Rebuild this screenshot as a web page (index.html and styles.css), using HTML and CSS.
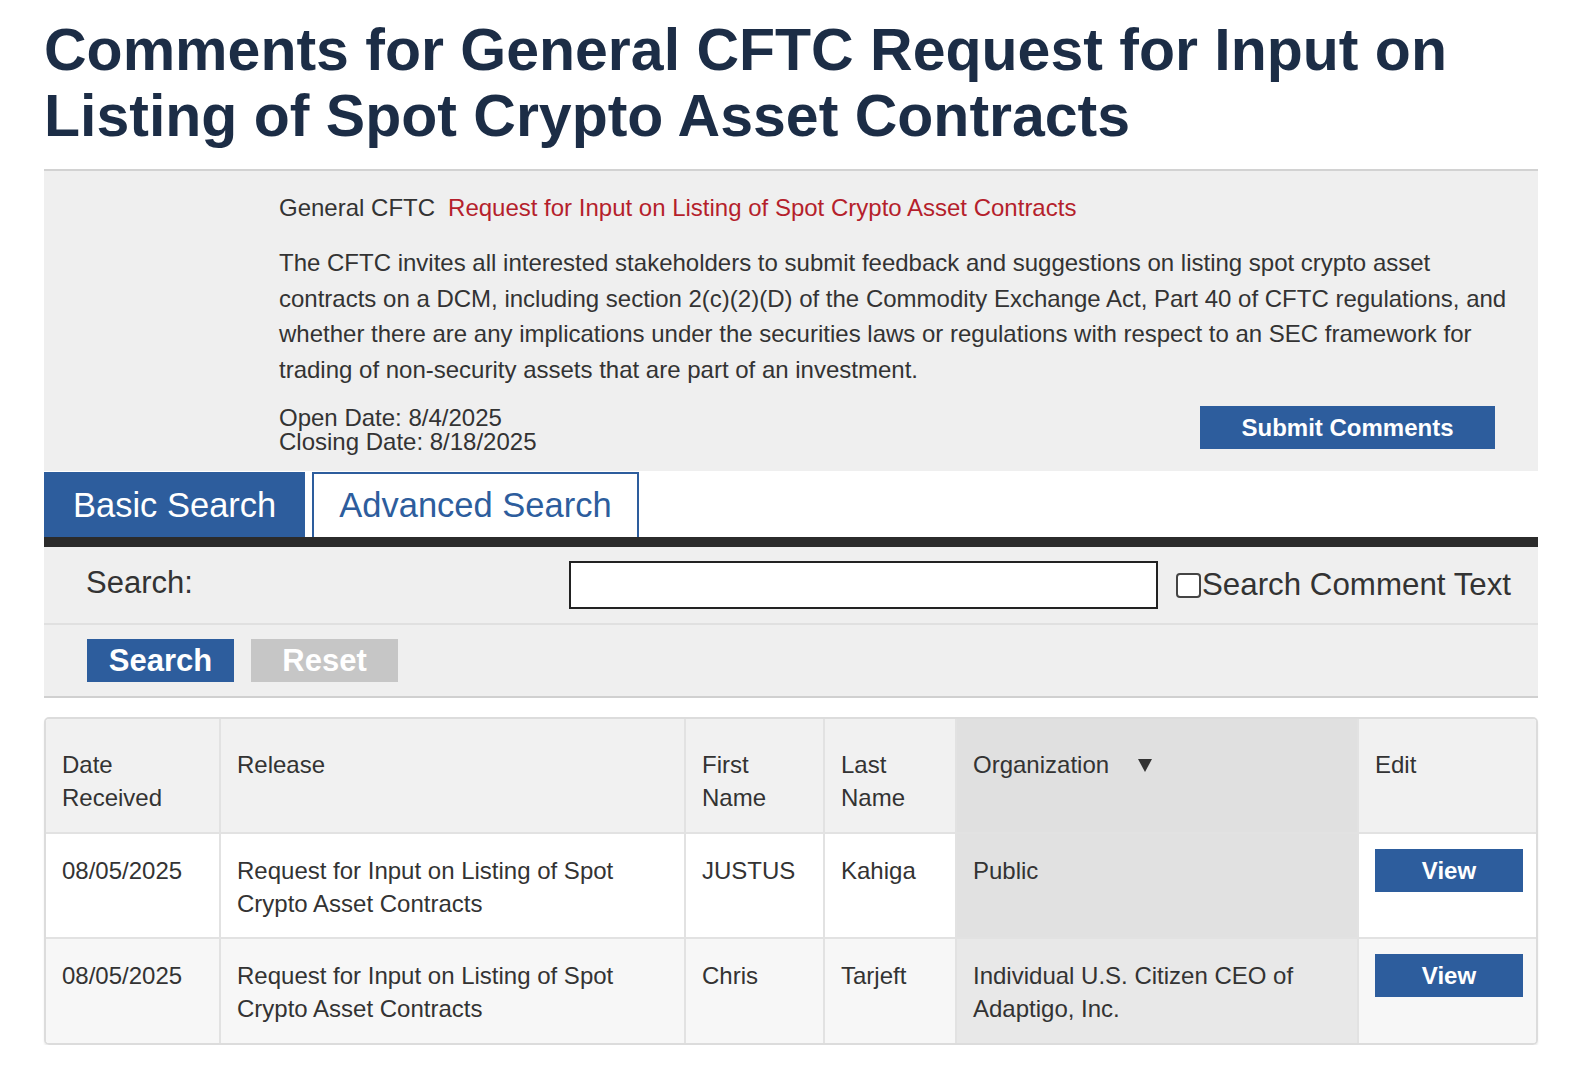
FILE: index.html
```html
<!DOCTYPE html>
<html lang="en">
<head>
<meta charset="utf-8">
<title>Comments for General CFTC Request for Input on Listing of Spot Crypto Asset Contracts</title>
<link rel="stylesheet" href="styles.css">
</head>
<body>
<div class="page">
  <h1 class="page-title">Comments for General CFTC Request for Input on Listing of Spot Crypto Asset Contracts</h1>

  <section class="release-box">
    <div class="release-head">
      <span class="release-type">General CFTC</span>
      <a class="release-link" href="#">Request for Input on Listing of Spot Crypto Asset Contracts</a>
    </div>
    <p class="release-desc">The CFTC invites all interested stakeholders to submit feedback and suggestions on listing spot crypto asset contracts on a DCM, including section 2(c)(2)(D) of the Commodity Exchange Act, Part 40 of CFTC regulations, and whether there are any implications under the securities laws or regulations with respect to an SEC framework for trading of non-security assets that are part of an investment.</p>
    <div class="release-foot">
      <div class="release-dates">
        <div>Open Date: 8/4/2025</div>
        <div>Closing Date: 8/18/2025</div>
      </div>
      <a class="btn btn-submit" href="#">Submit Comments</a>
    </div>
  </section>

  <nav class="tabs">
    <a class="tab tab-active" href="#">Basic Search</a>
    <a class="tab" href="#">Advanced Search</a>
  </nav>

  <section class="search-panel">
    <div class="search-row">
      <label class="search-label" for="q">Search:</label>
      <input class="search-input" id="q" type="text">
      <label class="search-check"><input type="checkbox" class="check-box"><span>Search Comment Text</span></label>
    </div>
    <div class="search-actions">
      <button class="btn btn-search" type="button">Search</button>
      <button class="btn btn-reset" type="button">Reset</button>
    </div>
  </section>

  <div class="table-wrap">
    <table class="comments">
      <colgroup>
        <col class="c-date">
        <col class="c-release">
        <col class="c-first">
        <col class="c-last">
        <col class="c-org">
        <col class="c-edit">
      </colgroup>
      <thead>
        <tr>
          <th>Date<br>Received</th>
          <th>Release</th>
          <th>First<br>Name</th>
          <th>Last<br>Name</th>
          <th class="sorted">Organization <span class="sort-arrow"></span></th>
          <th>Edit</th>
        </tr>
      </thead>
      <tbody>
        <tr>
          <td>08/05/2025</td>
          <td>Request for Input on Listing of Spot Crypto Asset Contracts</td>
          <td>JUSTUS</td>
          <td>Kahiga</td>
          <td class="sorted">Public</td>
          <td><a class="btn btn-view" href="#">View</a></td>
        </tr>
        <tr class="alt">
          <td>08/05/2025</td>
          <td>Request for Input on Listing of Spot Crypto Asset Contracts</td>
          <td>Chris</td>
          <td>Tarjeft</td>
          <td class="sorted">Individual U.S. Citizen CEO of Adaptigo, Inc.</td>
          <td><a class="btn btn-view" href="#">View</a></td>
        </tr>
      </tbody>
    </table>
  </div>
</div>
</body>
</html>
```

FILE: styles.css
```css
* { box-sizing: border-box; }

html, body {
  margin: 0;
  padding: 0;
  background: #ffffff;
}

body {
  font-family: "Liberation Sans", Arial, Helvetica, sans-serif;
  color: #333333;
}

.page {
  width: 1494px;
  margin-left: 44px;
}

.page-title {
  margin: 17px 0 0;
  padding-bottom: 20px;
  font-size: 59px;
  line-height: 66px;
  font-weight: 700;
  color: #1c2d46;
  border-bottom: 2px solid #d2d2d2;
}

/* release info box */
.release-box {
  background: #efefef;
  padding: 19px 25px 17px 235px;
  font-size: 24px;
  color: #333333;
}

.release-head {
  line-height: 35px;
  display: flex;
  gap: 13px;
}

.release-link {
  color: #b51f2c;
  text-decoration: none;
}

.release-desc {
  margin: 20px 0 0;
  line-height: 35.5px;
}

.release-foot {
  margin-top: 19px;
  padding-right: 18px;
  display: flex;
  justify-content: space-between;
  align-items: flex-start;
}

.release-dates {
  line-height: 24px;
}

.btn {
  display: inline-flex;
  align-items: center;
  justify-content: center;
  border: 0;
  color: #ffffff;
  font-family: "Liberation Sans", Arial, Helvetica, sans-serif;
  font-weight: 700;
  text-decoration: none;
  cursor: pointer;
}

.btn-submit {
  width: 295px;
  height: 43px;
  background: #2d5d9d;
  font-size: 24px;
}

/* tabs */
.tabs {
  display: flex;
  gap: 7px;
  margin-top: 1px;
  border-bottom: 10px solid #2b2b2b;
}

.tab {
  display: flex;
  align-items: center;
  height: 65px;
  padding: 0 25px;
  font-size: 34.5px;
  color: #2d5d9d;
  text-decoration: none;
  background: #ffffff;
  border: 2px solid #2d5d9d;
  border-bottom: 0;
}

.tab-active {
  background: #2d5d9d;
  color: #ffffff;
  padding-left: 27px;
  padding-right: 27px;
}

/* search panel */
.search-panel {
  background: #efefef;
  border-bottom: 2px solid #d0d0d0;
}

.search-row {
  display: flex;
  align-items: center;
  height: 78px;
  padding-left: 42px;
  border-bottom: 2px solid #e0e0e0;
}

.search-label {
  width: 483px;
  font-size: 31px;
  color: #333333;
  margin-top: -4px;
}

.search-input {
  width: 589px;
  height: 48px;
  border: 2px solid #222222;
  background: #ffffff;
  font-size: 24px;
  margin: 0;
}

.search-check {
  display: flex;
  align-items: center;
  margin-left: 18px;
  font-size: 31.3px;
  color: #333333;
}

.check-box {
  appearance: none;
  -webkit-appearance: none;
  width: 25px;
  height: 25px;
  margin: 0 1px 0 0;
  border: 2px solid #444444;
  border-radius: 4px;
  background: #ffffff;
}

.search-actions {
  display: flex;
  gap: 17px;
  height: 71px;
  padding: 14px 0 0 43px;
}

.btn-search,
.btn-reset {
  width: 147px;
  height: 43px;
  font-size: 31px;
}

.btn-search { background: #2d5d9d; }
.btn-reset  { background: #c6c6c6; }

/* table */
.table-wrap {
  margin-top: 19px;
  border: 2px solid #dcdcdc;
  border-radius: 5px;
  overflow: hidden;
  box-shadow: 0 2px 2px rgba(0, 0, 0, 0.08);
}

.comments {
  width: 100%;
  table-layout: fixed;
  border-collapse: collapse;
  font-size: 24px;
  line-height: 33px;
  color: #333333;
}

.c-date    { width: 174px; }
.c-release { width: 465px; }
.c-first   { width: 139px; }
.c-last    { width: 132px; }
.c-org     { width: 402px; }
.c-edit    { width: 178px; }

.comments th,
.comments td {
  text-align: left;
  vertical-align: top;
  border-left: 2px solid #e2e2e2;
  border-top: 2px solid #e2e2e2;
  padding: 20px 16px 17px 16px;
}

.comments th:first-child,
.comments td:first-child {
  border-left: 0;
}

.comments thead th {
  border-top: 0;
  font-weight: 400;
  background: #f1f1f1;
  padding-top: 29px;
  padding-bottom: 17px;
  height: 114px;
}

.comments tbody tr { background: #ffffff; }
.comments tbody tr.alt { background: #f7f7f7; }

.comments thead th.sorted { background: #e0e0e0; }
.comments tbody td.sorted { background: #e1e1e1; }
.comments tbody tr.alt td.sorted { background: #e8e8e8; }

.sort-arrow {
  display: inline-block;
  margin-left: 22px;
  width: 0;
  height: 0;
  border-left: 7px solid transparent;
  border-right: 7px solid transparent;
  border-top: 13px solid #333333;
  vertical-align: 1px;
}

.comments tbody td { height: 105px; }

.btn-view {
  width: 148px;
  height: 43px;
  background: #2d5d9d;
  font-size: 24px;
  margin-top: -5px;
}
```
